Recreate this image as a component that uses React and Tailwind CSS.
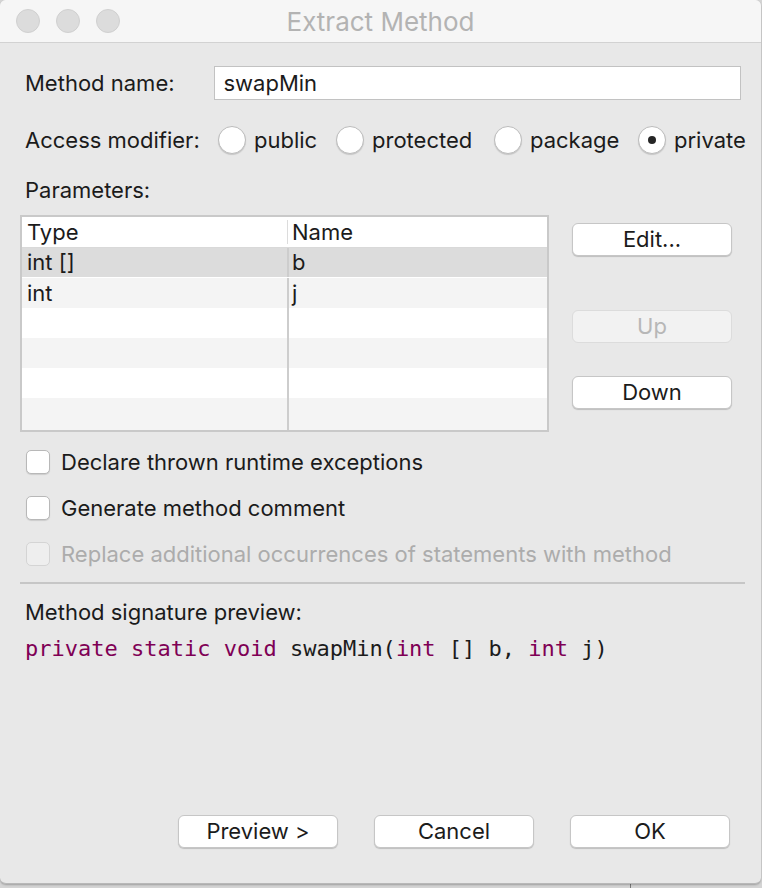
import React from 'react';

const ui = { fontFamily: 'Inter, "Liberation Sans", Arial, sans-serif' };
const mono = { fontFamily: '"DejaVu Sans Mono", "Liberation Mono", monospace' };

function Radio({ checked, label, width }) {
  return (
    <div className="flex items-center shrink-0" style={width ? { width } : undefined}>
      <div className="w-[28px] h-[28px] rounded-full bg-white border border-[#bcbcbc] shadow-[0_1px_1px_rgba(0,0,0,0.15)] flex items-center justify-center">
        {checked && <div className="w-[8px] h-[8px] rounded-full bg-[#262626]" />}
      </div>
      <span className="ml-[8px]">{label}</span>
    </div>
  );
}

function Check({ label, disabled }) {
  return (
    <div className="flex items-center h-[24px] pl-[6px]">
      <div className={`w-[24px] h-[24px] rounded-[5px] border ${disabled ? 'bg-[#eeeeee] border-[#d4d4d4]' : 'bg-white border-[#b8b8b8] shadow-[0_1px_1px_rgba(0,0,0,0.12)]'}`} />
      <span className={`ml-[11px] ${disabled ? 'text-[#acacac]' : ''}`}>{label}</span>
    </div>
  );
}

function Btn({ children, disabled }) {
  return (
    <div className={`w-[160px] h-[33px] rounded-[6px] border flex items-center justify-center ${disabled ? 'bg-[#f2f2f2] border-[#dcdcdc] text-[#b7b7b7]' : 'bg-white border-[#c6c6c6] shadow-[0_1px_1px_rgba(0,0,0,0.18)]'}`}>
      {children}
    </div>
  );
}

const rows = [
  { type: 'int []', name: 'b', bg: 'bg-[#dcdcdc]' },
  { type: 'int', name: 'j', bg: 'bg-[#f4f4f4]' },
  { type: '', name: '', bg: 'bg-white' },
  { type: '', name: '', bg: 'bg-[#f4f4f4]' },
  { type: '', name: '', bg: 'bg-white' },
  { type: '', name: '', bg: 'bg-[#f4f4f4]' },
];

export default function App() {
  return (
    <div className="w-[762px] h-[888px] bg-[#d4d4d4] overflow-hidden relative text-[22px] text-[#1b1b1b]" style={ui}>
      <div className="absolute left-[630px] top-[880px] w-px h-[8px] bg-[#7a7a7a]" />
      <div className="relative w-[761px] h-[884px] bg-[#e8e8e8] rounded-[6px] border-b border-[#b8b8b8] shadow-[0_1px_2px_rgba(0,0,0,0.25)] flex flex-col overflow-hidden">
        {/* title bar */}
        <div className="h-[43px] shrink-0 bg-[#f6f6f6] border-b border-[#d2d2d2] flex items-center relative">
          <div className="flex gap-[16px] pl-[16px]">
            <div className="w-[24px] h-[24px] rounded-full bg-[#dcdcdc] border border-[#d0d0d0]" />
            <div className="w-[24px] h-[24px] rounded-full bg-[#dcdcdc] border border-[#d0d0d0]" />
            <div className="w-[24px] h-[24px] rounded-full bg-[#dcdcdc] border border-[#d0d0d0]" />
          </div>
          <div className="absolute inset-0 flex items-center justify-center text-[26px] text-[#b3b3b3] pointer-events-none">Extract Method</div>
        </div>

        <div className="flex-1 flex flex-col px-[20px]">
          {/* method name */}
          <div className="flex items-center mt-[23px] h-[34px]">
            <span className="w-[195px] pl-[5px]">Method name:</span>
            <div className="w-[528px] h-[34px] bg-white border border-[#c2c2c2] flex items-center pl-[8px]">swapMin</div>
          </div>

          {/* access modifier */}
          <div className="flex items-center mt-[26px] h-[28px]">
            <span className="w-[198px] pl-[5px] shrink-0">Access modifier:</span>
            <Radio label="public" width={118} />
            <Radio label="protected" width={158} />
            <Radio label="package" width={144} />
            <Radio label="private" checked />
          </div>

          <div className="mt-[23px] pl-[5px] h-[26px] flex items-center">Parameters:</div>

          {/* parameters table + buttons */}
          <div className="flex mt-[12px]">
            <div className="w-[529px] h-[217px] border-2 border-[#c9c9c9] bg-white flex flex-col">
              <div className="h-[31px] flex items-center shrink-0 border-b border-[#d9d9d9]">
                <div className="w-[265px] pl-[5px] h-full flex items-center">Type</div>
                <div className="w-px h-[24px] bg-[#dcdcdc]" />
                <div className="pl-[4px]">Name</div>
              </div>
              {rows.map((r, i) => (
                <div key={i} className={`h-[30px] flex shrink-0 ${r.bg} ${i === 0 ? 'border-b border-white' : ''}`}>
                  <div className="w-[265px] pl-[5px] flex items-center">{r.type}</div>
                  <div className="w-[2px] bg-[#cdcdcd]" />
                  <div className="pl-[3px] flex items-center">{r.name}</div>
                </div>
              ))}
              <div className="flex-1 flex bg-[#f4f4f4]">
                <div className="w-[265px]" />
                <div className="w-[2px] bg-[#cdcdcd]" />
              </div>
            </div>
            <div className="ml-[23px] pt-[8px] flex flex-col">
              <Btn>Edit...</Btn>
              <div className="mt-[54px]"><Btn disabled>Up</Btn></div>
              <div className="mt-[33px]"><Btn>Down</Btn></div>
            </div>
          </div>

          {/* options */}
          <div className="flex flex-col gap-[22px] mt-[18px]">
            <Check label="Declare thrown runtime exceptions" />
            <Check label="Generate method comment" />
            <Check label="Replace additional occurrences of statements with method" disabled />
          </div>

          <div className="mt-[16px] h-[2px] bg-[#c6c6c6] mr-[-4px]" />

          <div className="mt-[16px] pl-[5px] h-[24px] flex items-center">Method signature preview:</div>
          <div className="mt-[10px] pl-[5px] text-[22px] h-[28px] flex items-center whitespace-pre" style={mono}>
            <span className="text-[#7f0055]">private static void </span>
            <span>swapMin(</span>
            <span className="text-[#7f0055]">int</span>
            <span> [] b, </span>
            <span className="text-[#7f0055]">int</span>
            <span> j)</span>
          </div>

          {/* footer buttons */}
          <div className="mt-auto mb-[35px] flex gap-[36px] pl-[158px]">
            <Btn>Preview &gt;</Btn>
            <Btn>Cancel</Btn>
            <Btn>OK</Btn>
          </div>
        </div>
      </div>
    </div>
  );
}
